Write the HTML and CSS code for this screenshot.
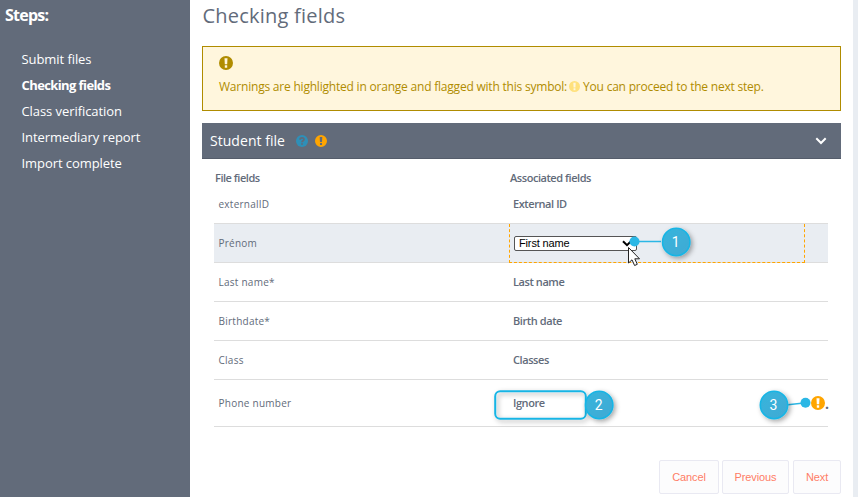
FILE: index.html
```html
<!DOCTYPE html>
<html lang="en">
<head>
  <meta charset="UTF-8" />
  <title>Checking fields</title>
  <link rel="stylesheet" href="styles.css">
</head>
<body>

  <!-- Shared icons -->
  <svg class="symbols" width="0" height="0">
    <symbol id="icon-warning" viewBox="0 0 14 14">
      <path fill-rule="evenodd" d="M7 0a7 7 0 1 1 0 14A7 7 0 0 1 7 0zM5.500 2.200l.3 6.100h2.400l.3-6.100zM5.800 9.300v2.400h2.400V9.300z" />
    </symbol>
    <symbol id="icon-help" viewBox="0 0 14 14">
      <circle cx="7" cy="7" r="7" />
      <path d="M4.700 5.400C4.700 2.700 9.300 2.700 9.300 5.300 9.300 6.900 7 6.700 7 8.500M7 9.500v2" fill="none" stroke="#626b7a" stroke-width="2" />
    </symbol>
  </svg>

  <aside class="sidebar">
    <h2>Steps:</h2>
    <ul>
      <li>Submit files</li>
      <li class="current">Checking fields</li>
      <li>Class verification</li>
      <li>Intermediary report</li>
      <li>Import complete</li>
    </ul>
  </aside>

  <main>
    <h1>Checking fields</h1>

    <div class="warning-box">
      <svg class="warning-icon"><use href="#icon-warning" /></svg>
      <p><span>Warnings are highlighted in orange and flagged with this symbol:</span><svg class="inline-icon"><use href="#icon-warning" /></svg><span>You can proceed to the next step.</span></p>
    </div>

    <div class="panel-header">
      <span class="panel-title">Student file</span>
      <svg class="help"><use href="#icon-help" /></svg>
      <svg class="alert"><use href="#icon-warning" /></svg>
      <svg class="chevron" viewBox="0 0 12 8"><path d="M1.300 1.300 6 6l4.700-4.700" /></svg>
    </div>

    <!-- Field mapping -->
    <div class="fields">
      <div class="row head">
        <span>File fields</span>
        <span>Associated fields</span>
      </div>
      <div class="row first">
        <span class="source">externalID</span>
        <span class="target"><b>External ID</b></span>
      </div>
      <div class="row selected">
        <span class="source">Prénom</span>
        <span class="target editing">
          <span class="select-wrap">
            <select><option>First name</option></select>
            <svg class="select-arrow" viewBox="0 0 10 7"><path d="M1 1.200l4 4 4-4" /></svg>
          </span>
        </span>
      </div>
      <div class="row">
        <span class="source">Last name*</span>
        <span class="target"><b>Last name</b></span>
      </div>
      <div class="row">
        <span class="source">Birthdate*</span>
        <span class="target"><b>Birth date</b></span>
      </div>
      <div class="row">
        <span class="source">Class</span>
        <span class="target"><b>Classes</b></span>
      </div>
      <div class="row tall">
        <span class="source">Phone number</span>
        <span class="target"><b>Ignore</b></span>
        <span class="flag"><svg><use href="#icon-warning" /></svg>.</span>
      </div>
    </div>

    <div class="actions">
      <button type="button" class="cancel">Cancel</button>
      <button type="button" class="previous">Previous</button>
      <button type="button" class="next">Next</button>
    </div>
  </main>

  <!-- Numbered callouts over the form -->
  <svg class="callouts" width="858" height="497">
    <defs>
      <linearGradient id="bubble" x1="0" y1="0" x2="1" y2="1">
        <stop offset="0" stop-color="#36b5dd" />
        <stop offset="1" stop-color="#41a9d3" />
      </linearGradient>
      <filter id="shadow" x="-30%" y="-30%" width="170%" height="170%">
        <feDropShadow dx="2" dy="2" stdDeviation="2.500" flood-color="#000" flood-opacity="0.35" />
      </filter>
    </defs>
    <g class="link">
      <path d="M634 241.500h27" />
      <circle cx="634.500" cy="241.500" r="5" />
      <path d="M788 404.800l18-2" />
      <circle cx="805.500" cy="402.700" r="5" />
    </g>
    <rect class="frame" x="495.200" y="391.200" width="90.600" height="27.600" rx="5" />
    <g class="bubble">
      <circle cx="676.200" cy="242" r="13.700" />
      <circle cx="599.200" cy="405" r="13.700" />
      <circle cx="774" cy="405" r="13.700" />
    </g>
    <g class="number">
      <text x="675.800" y="247">1</text>
      <text x="598.600" y="410">2</text>
      <text x="773.400" y="410">3</text>
    </g>
    <path class="pointer" d="M628.500 247.500v15.500l3.500-3.200 2.600 5.700 2.700-1.200-2.500-5.500h4.700z" />
  </svg>

</body>
</html>
```
FILE: styles.css
```css
* {
  box-sizing: border-box;
}
body {
  margin: 0;
  height: 497px;
  display: flex;
  overflow: hidden;
  background: #e9edf2;
  color: #626b7a;
  font-family: "Open Sans", sans-serif;
}
h1, h2, p, ul {
  margin: 0;
  padding: 0;
}
.symbols {
  position: absolute;
}
.sidebar {
  width: 190px;
  background: #626b7a;
  color: #fff;
}
.sidebar h2 {
  padding: 4px 0 0 5px;
  font-size: 16px;
  line-height: 22px;
  letter-spacing: -0.75px;
}
.sidebar ul {
  padding: 20px 0 0 21.5px;
  list-style: none;
}
.sidebar li {
  height: 26px;
  font-size: 13px;
  line-height: 26px;
  letter-spacing: -0.07px;
}
.sidebar .current {
  font-weight: bold;
  letter-spacing: -0.6px;
}
main {
  width: 663px;
  padding: 0 12px;
  background: #fff;
}
h1 {
  height: 46px;
  padding-left: 0.5px;
  font-size: 20px;
  font-weight: normal;
  line-height: 31px;
  letter-spacing: 0.22px;
}
.warning-box {
  height: 65px;
  padding: 9px 16px;
  border: 1px solid #b08c00;
  background: #fff6dd;
  color: #b08c00;
  font-size: 12px;
  letter-spacing: -0.21px;
}
.warning-icon {
  display: block;
  width: 14px;
  height: 14px;
  fill: #b08c00;
}
.warning-box p {
  display: flex;
  align-items: center;
  height: 16px;
  margin-top: 8px;
  white-space: nowrap;
}
.inline-icon {
  width: 11px;
  height: 11px;
  margin: 0 3px 0 2px;
  fill: #ffe17d;
}
.panel-header {
  display: flex;
  align-items: center;
  height: 36px;
  margin-top: 12px;
  padding: 0 14px 0 8px;
  border-bottom: 1px solid #555d6b;
  background: #626b7a;
  color: #fff;
  font-size: 14px;
}
.panel-title {
  letter-spacing: 0.04px;
}
.panel-header .help,
.panel-header .alert {
  width: 12px;
  height: 12px;
}
.panel-header .help {
  margin-left: 11px;
  fill: #2e8fb8;
}
.panel-header .alert {
  margin-left: 7px;
  fill: #ffa500;
}
.chevron {
  width: 12px;
  height: 8px;
  margin-left: auto;
  fill: none;
  stroke: #fff;
  stroke-width: 2;
}
.fields {
  width: 614px;
  margin-left: 12px;
  padding-top: 6px;
}
.row {
  display: grid;
  grid-template-columns: 295px 296px 1fr;
  align-items: center;
  height: 39px;
  border-bottom: 1px solid #ddd;
  font-size: 11px;
}
.row.head {
  height: 26px;
  padding: 0 0 2px 1px;
  border: 0;
  font-weight: 600;
  letter-spacing: -0.47px;
}
.row.head span + span {
  letter-spacing: -0.45px;
}
.row.first {
  height: 33px;
  padding-bottom: 6px;
}
.row.selected {
  background: #e9edf2;
}
.row.tall {
  height: 47px;
}
.source {
  padding-left: 4.5px;
  font-size: 10px;
  letter-spacing: 0.25px;
}
.selected .source {
  margin-top: -1px;
}
.target {
  padding-left: 4px;
}
.target b {
  display: block;
  margin-top: -1px;
  font-weight: 600;
  letter-spacing: -0.42px;
}
.editing {
  display: flex;
  align-items: center;
  height: 39px;
  border: 1px dashed #ffa500;
  border-top: 0;
}
.select-wrap {
  position: relative;
  width: 123px;
  height: 15px;
}
select {
  display: block;
  width: 123px;
  height: 15px;
  padding: 0 4px;
  border: 1px solid #555;
  border-radius: 2px;
  background: #fff;
  color: #000;
  font: 11px "Liberation Sans", sans-serif;
  letter-spacing: -0.15px;
  appearance: none;
}
.select-arrow {
  position: absolute;
  top: 4px;
  right: 5px;
  width: 10px;
  height: 7px;
  fill: none;
  stroke: #000;
  stroke-width: 2;
}
.flag {
  display: flex;
  align-items: center;
  margin-left: 6px;
  font-size: 14px;
  font-weight: bold;
  white-space: nowrap;
}
.flag svg {
  flex: none;
  width: 14px;
  height: 14px;
  fill: #ffa500;
}
.actions {
  display: flex;
  justify-content: flex-end;
  margin-top: 33px;
}
.actions button {
  height: 34px;
  padding: 0;
  border: 1px solid #e9e9f2;
  border-radius: 2px;
  background: #fcfcfd;
  color: #ff7d66;
  font: 11px "Liberation Sans", sans-serif;
  letter-spacing: -0.1px;
}
.actions .cancel {
  width: 60px;
  margin-right: 3px;
}
.actions .previous {
  width: 67px;
  margin-right: 4px;
}
.actions .next {
  width: 48px;
}
.callouts {
  position: absolute;
  top: 0;
  left: 0;
}
.link {
  fill: #2bb7e5;
  stroke: none;
}
.link path {
  stroke: #2bb7e5;
  stroke-width: 1.5;
}
.frame {
  fill: none;
  stroke: #19b5e5;
  stroke-width: 2;
  filter: url(#shadow);
}
.bubble {
  fill: url(#bubble);
  stroke: #19b5e5;
  stroke-width: 1.6;
  filter: url(#shadow);
}
.number {
  fill: #fff;
  font-family: Roboto, sans-serif;
  font-size: 14px;
  text-anchor: middle;
}
.pointer {
  fill: #fff;
  stroke: #222;
  stroke-width: 1;
}
```
